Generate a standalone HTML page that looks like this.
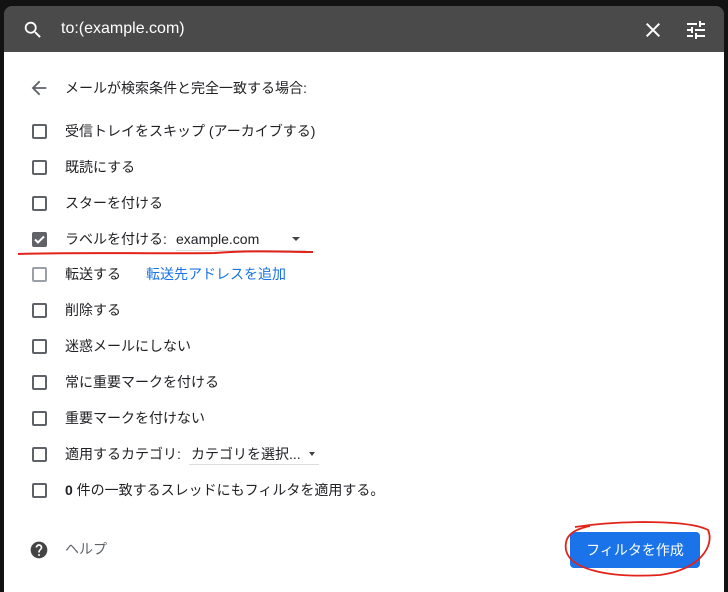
<!DOCTYPE html>
<html><head><meta charset="utf-8"><style>
*{margin:0;padding:0;box-sizing:border-box}
body{width:728px;height:585px;background:#121212;position:relative;overflow:hidden;font-family:"Liberation Sans","Noto Sans CJK JP",sans-serif;}
.bar{position:absolute;left:4px;top:6px;width:720px;height:46px;background:#4a4a4a;border-radius:8px 8px 0 0}
.panel{position:absolute;left:4px;top:52px;width:720px;height:540px;background:#fff}
.t{position:absolute;font-size:14px;color:#202124;line-height:18px;white-space:nowrap}
.cb{position:absolute;left:32px;width:15px;height:15px;border:2px solid #5f6368;border-radius:2px}
</style></head><body>
<div class="bar"></div>
<svg style="position:absolute;left:22px;top:19px" width="22" height="22" viewBox="0 0 24 24"><path fill="#fff" d="M15.5 14h-.79l-.28-.27A6.47 6.47 0 0016 9.5 6.5 6.5 0 109.5 16c1.61 0 3.09-.59 4.23-1.57l.27.28v.79l5 4.99L20.49 19l-4.99-5zm-6 0C7.01 14 5 11.99 5 9.5S7.01 5 9.5 5 14 7.01 14 9.5 11.99 14 9.5 14z"/></svg>
<div class="t" style="left:61px;top:20px;color:#fff;font-size:16px">to:(example.com)</div>
<svg style="position:absolute;left:641px;top:18px" width="24" height="24" viewBox="0 0 24 24"><path fill="#fff" d="M19 6.41L17.59 5 12 10.59 6.41 5 5 6.41 10.59 12 5 17.59 6.41 19 12 13.41 17.59 19 19 17.59 13.41 12z"/></svg>
<svg style="position:absolute;left:684px;top:18px" width="24" height="24" viewBox="0 0 24 24"><path fill="#fff" d="M3 17v2h6v-2H3zM3 5v2h10V5H3zm10 16v-2h8v-2h-8v-2h-2v6h2zM7 9v2H3v2h4v2h2V9H7zm14 4v-2H11v2h10zm-6-4h2V7h4V5h-4V3h-2v6z"/></svg>
<div class="panel"></div>
<svg style="position:absolute;left:28px;top:77px" width="22" height="22" viewBox="0 0 24 24"><path fill="#5f6368" d="M20 11H7.83l5.59-5.59L12 4l-8 8 8 8 1.41-1.41L7.83 13H20v-2z"/></svg>
<div class="t" style="left:65px;top:79px">メールが検索条件と完全一致する場合:</div>

<div class="cb" style="top:124px"></div><div class="t" style="left:65px;top:122px">受信トレイをスキップ (アーカイブする)</div>
<div class="cb" style="top:160px"></div><div class="t" style="left:65px;top:158px">既読にする</div>
<div class="cb" style="top:196px"></div><div class="t" style="left:65px;top:194px">スターを付ける</div>
<div class="cb" style="top:232px;background:#5f6368"></div>
<svg style="position:absolute;left:32px;top:232px" width="15" height="15" viewBox="0 0 15 15"><path d="M3 7.5l3 3 6-6" stroke="#fff" stroke-width="2" fill="none"/></svg>
<div class="t" style="left:65px;top:230px">ラベルを付ける:</div>
<div class="t" style="left:176px;top:230px">example.com</div>
<div style="position:absolute;left:176px;top:250px;width:130px;height:1px;background:#ddd"></div>
<div style="position:absolute;left:292px;top:237px;border:4px solid transparent;border-top:4px solid #444;border-bottom:0"></div>
<div class="cb" style="top:267px;border-color:#9aa0a6"></div><div class="t" style="left:65px;top:265px">転送する</div>
<div class="t" style="left:146px;top:265px;color:#1a73e8">転送先アドレスを追加</div>
<div class="cb" style="top:303px"></div><div class="t" style="left:65px;top:301px">削除する</div>
<div class="cb" style="top:339px"></div><div class="t" style="left:65px;top:337px">迷惑メールにしない</div>
<div class="cb" style="top:375px"></div><div class="t" style="left:65px;top:373px">常に重要マークを付ける</div>
<div class="cb" style="top:411px"></div><div class="t" style="left:65px;top:409px">重要マークを付けない</div>
<div class="cb" style="top:447px"></div><div class="t" style="left:65px;top:445px">適用するカテゴリ:</div>
<div class="t" style="left:191px;top:445px">カテゴリを選択...</div>
<div style="position:absolute;left:189px;top:464px;width:130px;height:1px;background:#ddd"></div>
<div style="position:absolute;left:309px;top:452px;border:3.5px solid transparent;border-top:4px solid #444;border-bottom:0"></div>
<div class="cb" style="top:483px"></div><div class="t" style="left:65px;top:481px"><b>0</b> 件の一致するスレッドにもフィルタを適用する。</div>

<svg style="position:absolute;left:29px;top:540px" width="20" height="20" viewBox="0 0 24 24"><path fill="#444" d="M12 2C6.48 2 2 6.48 2 12s4.48 10 10 10 10-4.48 10-10S17.52 2 12 2zm1 17h-2v-2h2v2zm2.07-7.75l-.9.92C13.45 12.9 13 13.5 13 15h-2v-.5c0-1.1.45-2.1 1.17-2.83l1.24-1.26c.37-.36.59-.86.59-1.41 0-1.1-.9-2-2-2s-2 .9-2 2H8c0-2.21 1.79-4 4-4s4 1.79 4 4c0 .88-.36 1.68-.93 2.25z"/></svg>
<div class="t" style="left:65px;top:540px;color:#5f6368">ヘルプ</div>
<div style="position:absolute;left:570px;top:532px;width:130px;height:36px;background:#1a73e8;border-radius:4px;color:#fff;font-size:14px;line-height:36px;text-align:center">フィルタを作成</div>
<svg style="position:absolute;left:0;top:0" width="728" height="585"><path d="M18 254 C80 252 150 254 215 253 C250 250 290 252 313 252" stroke="#e2231a" stroke-width="2" fill="none"/><path d="M575 527 C620 520 690 520 708 530 C715 545 700 570 660 575 C610 578 570 570 566 550 C564 538 570 530 590 526" stroke="#e2231a" stroke-width="1.8" fill="none"/></svg>
</body></html>
